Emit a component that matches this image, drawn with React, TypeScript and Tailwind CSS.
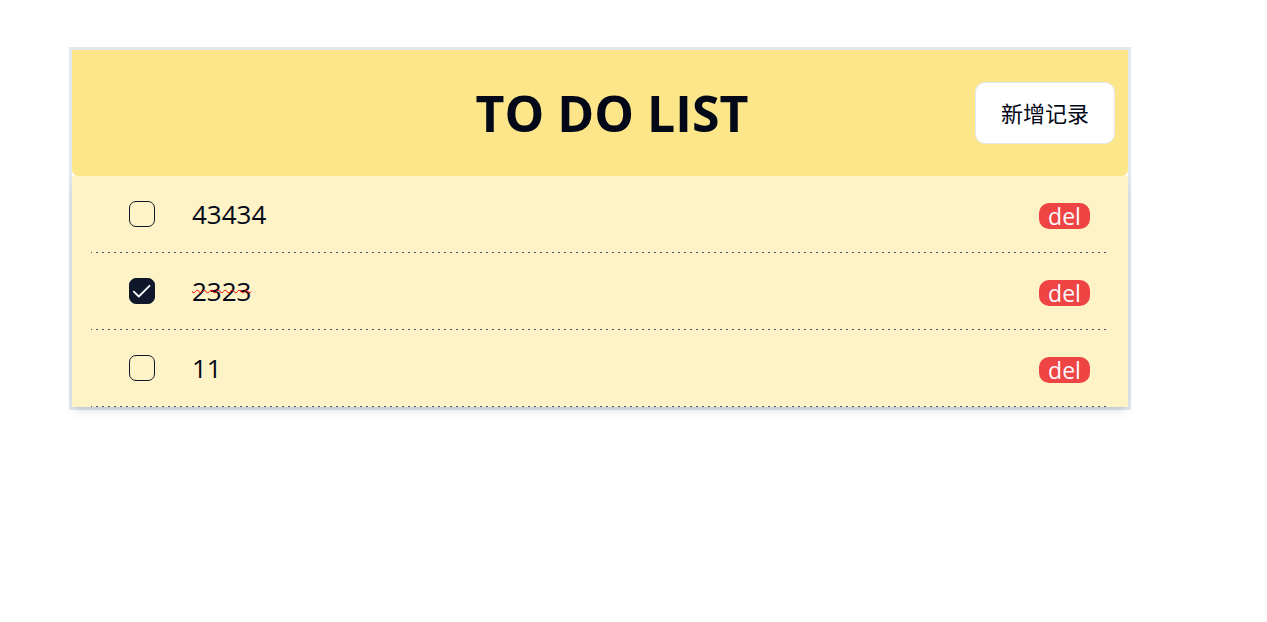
import { useState } from "react";

type Todo = { id: number; text: string; done: boolean };

const initialTodos: Todo[] = [
  { id: 1, text: "43434", done: false },
  { id: 2, text: "2323", done: true },
  { id: 3, text: "11", done: false },
];

function TodoRow({
  todo,
  onToggle,
  onDelete,
}: {
  todo: Todo;
  onToggle: () => void;
  onDelete: () => void;
}) {
  return (
    <li className="flex h-[77px] items-center bg-[repeating-linear-gradient(to_right,#475569_0px,#475569_1px,transparent_1px,transparent_5px,#475569_5px,#475569_6px)] bg-[length:100%_1px] bg-bottom bg-no-repeat pr-[19px] pb-[2px] pl-[38px]">
      <span className="grid shrink-0">
        <input
          id={`todo-${todo.id}`}
          type="checkbox"
          checked={todo.done}
          onChange={onToggle}
          className="col-start-1 row-start-1 size-[26px] appearance-none rounded-[7px] border border-slate-900 checked:bg-slate-900"
        />
        {todo.done && (
          <svg
            viewBox="0 0 26 26"
            className="pointer-events-none col-start-1 row-start-1 size-[26px]"
            fill="none"
            stroke="#f8fafc"
            strokeWidth="1.8"
            strokeLinecap="round"
            strokeLinejoin="round"
            aria-hidden="true"
          >
            <path d="M20.5 7.8 9.8 18.5 4.8 13.6" />
          </svg>
        )}
      </span>
      <label
        htmlFor={`todo-${todo.id}`}
        className={
          todo.done
            ? "ml-[37px] text-[26px] leading-9 line-through decoration-[#ff0000] decoration-wavy decoration-1"
            : "ml-[37px] text-[26px] leading-9"
        }
      >
        {todo.text}
      </label>
      <button
        type="button"
        onClick={onDelete}
        aria-label={`del ${todo.text}`}
        className="mt-1 ml-auto h-[26px] w-[51px] rounded-[10px] bg-[#ef4444] text-[23px] leading-6 text-slate-50"
      >
        del
      </button>
    </li>
  );
}

export default function App() {
  const [todos, setTodos] = useState(initialTodos);

  const add = () =>
    setTodos((list) => [...list, { id: Date.now(), text: "新增记录", done: false }]);

  return (
    <main className="min-h-screen bg-white pt-[47px] pr-[136px] pb-12 pl-[69px] font-['Open_Sans','Noto_Sans_CJK_SC',sans-serif] text-[#020817]">
      <section className="border-[3px] border-slate-200">
        <header className="grid h-[126px] grid-cols-[1fr_auto_1fr] items-center rounded-b-md bg-[#fde68a] pr-[13px] pl-[37px]">
          <h1 className="col-start-2 text-[50px] leading-none font-bold">TO DO LIST</h1>
          <button
            type="button"
            onClick={add}
            className="h-[62px] justify-self-end rounded-[10px] border border-slate-200 bg-white px-[25px] text-[22px]"
          >
            新增记录
          </button>
        </header>
        <ul className="bg-[#fef3c7] px-[19px] shadow-[0_6px_10px_-2px_rgba(0,0,0,0.1),0_3px_6px_-3px_rgba(0,0,0,0.1)]">
          {todos.map((todo) => (
            <TodoRow
              key={todo.id}
              todo={todo}
              onToggle={() =>
                setTodos((list) =>
                  list.map((t) => (t.id === todo.id ? { ...t, done: !t.done } : t)),
                )
              }
              onDelete={() => setTodos((list) => list.filter((t) => t.id !== todo.id))}
            />
          ))}
        </ul>
      </section>
    </main>
  );
}
